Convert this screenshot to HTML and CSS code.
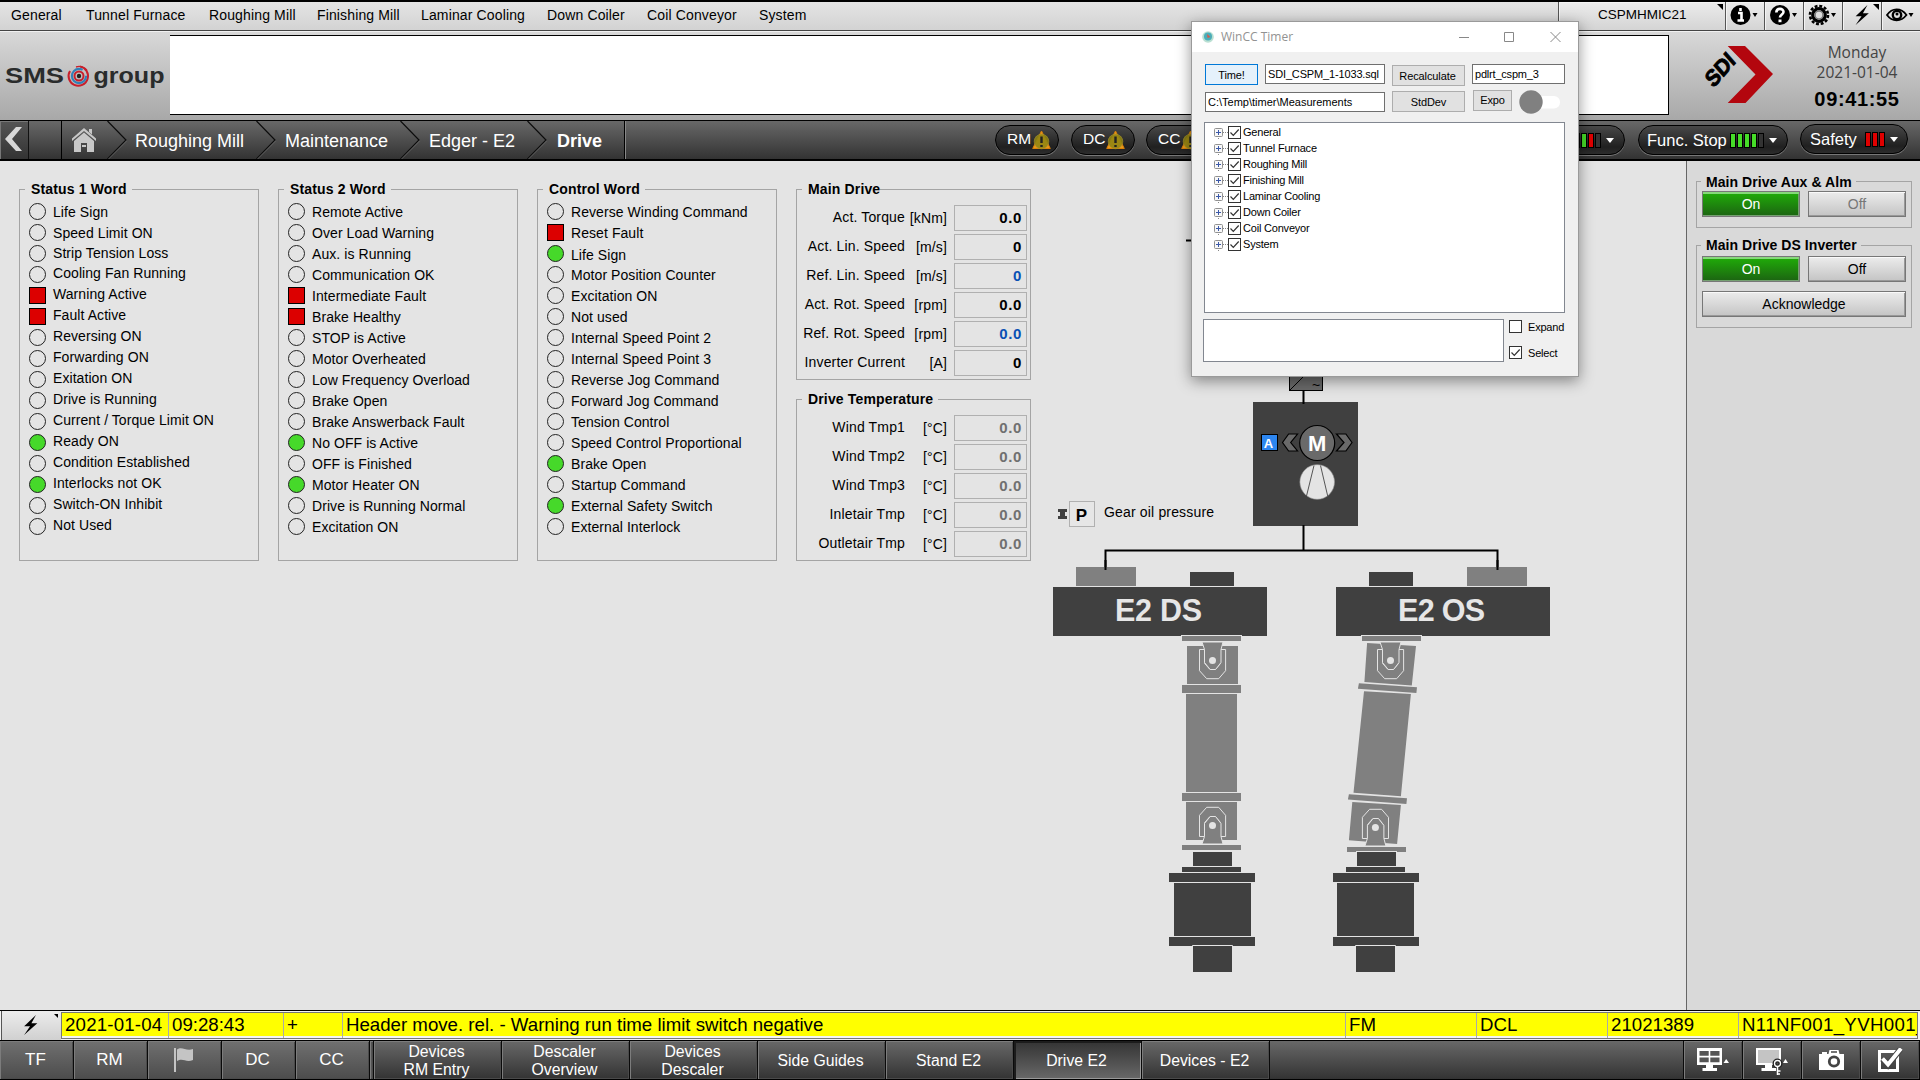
FILE: index.html
```html
<!DOCTYPE html>
<html lang="en">
<head>
<meta charset="utf-8">
<title>Drive E2</title>
<link rel="stylesheet" href="styles.css">
</head>
<body>
<svg width="0" height="0" class="defs">
  <defs>
    <symbol id="bolt" viewBox="0 0 16 22"><path d="M14 0 1 12.500H7.500L1 22 15.500 9H9z"/></symbol>
    <symbol id="warn" viewBox="0 0 19 20"><path d="M9.500 1 18.300 18.500H.7z" fill="#e8981c" stroke="#d98008"/><circle cx="9.500" cy="11.500" r="7.300" fill="#8f8412" fill-opacity=".88" stroke="#a5922c" stroke-width=".6"/><path d="M9.500 6.500v6.500M9.500 15v2" stroke="#222" stroke-width="2.400"/></symbol>
    <symbol id="check" viewBox="0 0 13 13"><rect x=".5" y=".5" width="12" height="12" fill="#fff" stroke="#333"/><path d="M2.500 6.500 5.300 9.300 10.700 3.500" fill="none" stroke="#333" stroke-width="1.200"/></symbol>
    <symbol id="plus" viewBox="0 0 9 9"><rect x=".5" y=".5" width="8" height="8" rx="1" fill="#f8f8f8" stroke="#919191"/><path d="M2 4.500h5M4.500 2v5" stroke="#3b58a8"/></symbol>
    <symbol id="crumb" viewBox="0 0 20 38"><path d="M.5 0 19 19 .5 38" fill="none" stroke="#0c0c0c" stroke-width="1.200"/><path d="M1.500 38 20 19.500" fill="none" stroke="#707070" stroke-width=".8"/></symbol>
  </defs>
</svg>

<header class="menubar">
  <nav class="menu"><a class="m1">General</a><a class="m2">Tunnel Furnace</a><a class="m3">Roughing Mill</a><a class="m4">Finishing Mill</a><a class="m5">Laminar Cooling</a><a class="m6">Down Coiler</a><a class="m7">Coil Conveyor</a><a>System</a></nav>
  <div class="station"><span>CSPMHMIC21</span><i class="corner"></i></div>
  <div class="tool"><svg width="38" height="28" viewBox="0 0 38 28"><circle cx="14.500" cy="13" r="10"/><path d="M14.500 6v3M12 11h3.500v7M11.500 18.500h6.500" fill="none" stroke="#fff" stroke-width="2.600"/><path d="M26.500 11h5l-2.500 4z"/></svg></div>
  <div class="tool"><svg width="38" height="28" viewBox="0 0 38 28"><circle cx="15" cy="13" r="10"/><path d="M11.300 10.500C11.500 5.500 18.700 6 18.500 10 18.300 12.500 15 12.500 15 15.500" fill="none" stroke="#fff" stroke-width="2.600"/><path d="M13.500 17.500h3v2.700h-3z" fill="#fff"/><path d="M27 11h5l-2.500 4z"/></svg></div>
  <div class="tool"><svg width="38" height="28" viewBox="0 0 38 28"><circle cx="15" cy="13" r="9" fill="none" stroke="#000" stroke-width="2.600" stroke-dasharray="2.900 1.812"/><circle cx="15" cy="13" r="6.300" fill="#ddd" stroke="#000" stroke-width="3.200"/><circle cx="15" cy="13" r="4" fill="#ddd" stroke="#777" stroke-width="1.500"/><path d="M27 11h5l-2.500 4z"/></svg></div>
  <div class="tool"><svg width="16" height="20" class="bolt-top"><use href="#bolt"/></svg><i class="corner"></i></div>
  <div class="tool"><svg width="38" height="28" viewBox="0 0 38 28"><path d="M5 13C10 5.500 19 5.500 24.500 13 19 20 10 20 5 13z" fill="none" stroke="#000" stroke-width="1.800"/><circle cx="15" cy="13" r="4.200" fill="none" stroke="#000" stroke-width="2.400"/><circle cx="15" cy="12" r="1.500"/><path d="M26.500 11h5l-2.500 4z"/></svg></div>
</header>

<section class="banner">
  <svg class="sms" width="170" height="84" viewBox="0 34 170 84">
    <g font-family="Liberation Sans, Arial, sans-serif" font-weight="bold" font-size="21.500" fill="#2a2c2c">
      <text x="5" y="82.500" textLength="59" lengthAdjust="spacingAndGlyphs">SMS</text>
      <text x="93.500" y="82.500" textLength="71" lengthAdjust="spacingAndGlyphs">group</text>
    </g>
    <g fill="none"><path d="M80 66.500A9.700 9.700 0 1 1 70 71" stroke="#c8202c" stroke-width="2"/><path d="M76 67a9.700 9.700 0 0 1 11 3.500" stroke="#c8202c" stroke-width="1.500"/><circle cx="79" cy="76" r="7.100" stroke="#3180b8" stroke-width="2.100" stroke-dasharray="37 7"/><circle cx="79" cy="76" r="4.500" stroke="#c8202c" stroke-width="2"/></g><circle cx="79" cy="76" r="2.200" fill="#222"/>
  </svg>
  <div class="message"></div>
  <svg class="sdi" width="88" height="84" viewBox="1698 34 88 84">
    <path d="M1727.700 46H1745L1773 74 1745.500 103H1727.700L1755.500 74.500z" fill="#b3060e"/>
    <text transform="translate(1713.500 88.500) rotate(-49) skewX(-8)" font-family="Liberation Sans, Arial, sans-serif" font-weight="bold" font-size="22" textLength="35" lengthAdjust="spacingAndGlyphs" stroke="#000" stroke-width=".9">SDI</text>
  </svg>
  <div class="clock"><span>Monday</span><span>2021-01-04</span><b>09:41:55</b></div>
</section>

<nav class="crumbs">
  <div class="back"><svg width="18" height="24" viewBox="0 0 18 24"><path d="M11 0h6L7 12l10 12h-6L0 12z" fill="#d8d8d8"/></svg></div>
  <div class="spacer"></div>
  <div class="home"><svg width="24" height="24" viewBox="0 0 24 24"><path d="M12 0 24 10.500V13L12 3 0 13v-2.500z" fill="#c8c8c8"/><path d="M17 1h3v5.500l-3-2.500zM12 4.500 22 13v11h-7v-9H9v9H2V13z" fill="#c8c8c8"/><path d="M10 11h4v4h-4zM10 17h4v2h-4z" fill="#c8c8c8"/></svg></div>
  <svg class="sep" width="20" height="38"><use href="#crumb"/></svg><span class="c1">Roughing Mill</span>
  <svg class="sep" width="20" height="38"><use href="#crumb"/></svg><span class="c2">Maintenance</span>
  <svg class="sep" width="20" height="38"><use href="#crumb"/></svg><span class="c3">Edger - E2</span>
  <svg class="sep" width="20" height="38"><use href="#crumb"/></svg><span class="c4"><b>Drive</b></span>
  <div class="pills">
    <div class="pill small">RM<svg width="19" height="20"><use href="#warn"/></svg></div>
    <div class="pill small">DC<svg width="19" height="20"><use href="#warn"/></svg></div>
    <div class="pill small last">CC<svg width="19" height="20"><use href="#warn"/></svg></div>
    <div class="pill levels"><i class="bar r"></i><i class="bar g"></i><i class="bar r"></i><i class="bar"></i><i class="arrow"></i></div>
    <div class="pill stop"><span>Func. Stop</span><i class="bar g"></i><i class="bar g"></i><i class="bar g"></i><i class="bar g"></i><i class="bar"></i><i class="arrow"></i></div>
    <div class="pill safety"><span>Safety</span><i class="bar r"></i><i class="bar r"></i><i class="bar r"></i><i class="arrow"></i></div>
  </div>
</nav>

<main>
  <div class="groups">
    <fieldset class="word first"><legend>Status 1 Word</legend><ul>
      <li class="flush"><i></i>Life Sign</li><li class="flush"><i></i>Speed Limit ON</li><li class="near"><i></i>Strip Tension Loss</li><li><i></i>Cooling Fan Running</li>
      <li><i class="bad"></i>Warning Active</li><li><i class="bad"></i>Fault Active</li><li><i></i>Reversing ON</li><li><i></i>Forwarding ON</li>
      <li><i></i>Exitation ON</li><li><i></i>Drive is Running</li><li><i></i>Current / Torque Limit ON</li><li><i class="ok"></i>Ready ON</li>
      <li><i></i>Condition Established</li><li><i class="ok"></i>Interlocks not OK</li><li><i></i>Switch-ON Inhibit</li><li><i></i>Not Used</li>
    </ul></fieldset>
    <fieldset class="word"><legend>Status 2 Word</legend><ul>
      <li><i></i>Remote Active</li><li><i></i>Over Load Warning</li><li><i></i>Aux. is Running</li><li><i></i>Communication OK</li>
      <li><i class="bad"></i>Intermediate Fault</li><li><i class="bad"></i>Brake Healthy</li><li><i></i>STOP is Active</li><li><i></i>Motor Overheated</li>
      <li><i></i>Low Frequency Overload</li><li><i></i>Brake Open</li><li><i></i>Brake Answerback Fault</li><li><i class="ok"></i>No OFF is Active</li>
      <li><i></i>OFF is Finished</li><li><i class="ok"></i>Motor Heater ON</li><li><i></i>Drive is Running Normal</li><li><i></i>Excitation ON</li>
    </ul></fieldset>
    <fieldset class="word"><legend>Control Word</legend><ul>
      <li><i></i>Reverse Winding Command</li><li><i class="bad"></i>Reset Fault</li><li class="low"><i class="ok"></i>Life Sign</li><li><i></i>Motor Position Counter</li>
      <li><i></i>Excitation ON</li><li><i></i>Not used</li><li><i></i>Internal Speed Point 2</li><li><i></i>Internal Speed Point 3</li>
      <li><i></i>Reverse Jog Command</li><li><i></i>Forward Jog Command</li><li><i></i>Tension Control</li><li><i></i>Speed Control Proportional</li>
      <li><i class="ok"></i>Brake Open</li><li><i></i>Startup Command</li><li><i class="ok"></i>External Safety Switch</li><li><i></i>External Interlock</li>
    </ul></fieldset>
    <div class="values">
      <fieldset class="drive"><legend class="tight">Main Drive</legend>
        <p><span>Act. Torque</span><em>[kNm]</em><b>0.0</b></p>
        <p><span>Act. Lin. Speed</span><em>[m/s]</em><b>0</b></p>
        <p><span>Ref. Lin. Speed</span><em>[m/s]</em><b class="ref">0</b></p>
        <p><span>Act. Rot. Speed</span><em>[rpm]</em><b>0.0</b></p>
        <p><span>Ref. Rot. Speed</span><em>[rpm]</em><b class="ref">0.0</b></p>
        <p><span>Inverter Current</span><em>[A]</em><b>0</b></p>
      </fieldset>
      <fieldset class="temp"><legend>Drive Temperature</legend>
        <p><span>Wind Tmp1</span><em>[°C]</em><b class="off">0.0</b></p>
        <p><span>Wind Tmp2</span><em>[°C]</em><b class="off">0.0</b></p>
        <p><span>Wind Tmp3</span><em>[°C]</em><b class="off">0.0</b></p>
        <p><span>Inletair Tmp</span><em>[°C]</em><b class="off">0.0</b></p>
        <p><span>Outletair Tmp</span><em>[°C]</em><b class="off">0.0</b></p>
      </fieldset>
    </div>
  </div>

  <svg class="mimic" width="646" height="849" viewBox="1040 161 646 849" font-family="Liberation Sans, Arial, sans-serif">
    <path d="M1186 240.500h40" stroke="#000" stroke-width="2"/>
    <rect x="1289.500" y="357.500" width="33" height="33" fill="#6a6a6a" stroke="#000"/><path d="M1290 390 1322 358" stroke="#000"/>
    <text x="1312" y="390" font-size="14">~</text>
    <rect x="1253" y="402" width="105" height="124" fill="#404040"/>
    <path d="M1303.500 391v13M1303.500 525v26M1105.500 570v-19.500H1497.500V570" fill="none" stroke="#000" stroke-width="2"/>
    <rect x="1261.500" y="434.500" width="16" height="16" fill="#2d86f0" stroke="#000"/>
    <text x="1268.500" y="447.500" font-size="13" font-weight="bold" fill="#fff" text-anchor="middle">A</text>
    <g fill="#6a6a6a" stroke="#000" stroke-width="1.200"><path d="M1282.500 442.500 1288.600 434H1297.500L1290.700 442.500 1297.500 451H1288.600z"/><path d="M1352 442.500 1345.900 434H1336.500L1344 442.500 1336.500 451H1345.900z"/><circle cx="1317.200" cy="443" r="17.500"/></g>
    <text x="1317.200" y="451" font-size="22" font-weight="bold" fill="#fff" text-anchor="middle">M</text>
    <circle cx="1317.200" cy="482" r="17.300" fill="#e4e4e4" stroke="#999" stroke-width=".6"/><path d="M1314 465.500 1306.500 496M1320.500 465.500 1327.700 496" stroke="#555"/>
    <path d="M1058 509h9v3h-2v4h2v3h-9v-3h2v-4h-2z" fill="#404040"/>
    <rect x="1069.500" y="501.500" width="25" height="25" fill="#e6e6e6" stroke="#b0b0b0"/>
    <text x="1081.500" y="520.500" font-size="17" font-weight="bold" text-anchor="middle">P</text>
    <text x="1104" y="517" font-size="14" textLength="110">Gear oil pressure</text>

    <path d="M1076 567h60v19h-60zM1467 567h60v19h-60z" fill="#808080"/>
    <path d="M1105.500 560v10M1497.500 560v10" stroke="#000" stroke-width="2"/>
    <path d="M1190 572h44v14h-44zM1369 572h44v14h-44zM1053 587h214v49h-214zM1336 587h214v49h-214z" fill="#404040"/>
    <g font-size="30.500" font-weight="bold" fill="#e6e6e6"><text x="1115" y="621" textLength="87">E2 DS</text><text x="1398" y="621" textLength="87">E2 OS</text></g>

    <g fill="#808080">
      <path d="M1181 635h61v1h-61zM1361 635h61v1h-61z" fill="#e4e4e4"/>
      <path d="M1182 636h59v5h-59zM1187 646h51v39h-51zM1182 685h59v8h-59zM1186 694h51v98h-51zM1182 793h59v8h-59zM1186 802h51v38h-51zM1182 845h59v5h-59z"/>
      <path d="M1187 684.500h51" stroke="#e4e4e4"/>
      <path d="M1362 636h59v5h-59zM1367.100 643 1416 646 1411.800 685.500 1364.400 682zM1358.900 683.300 1417 687.300 1416.400 693 1357.900 688.800zM1364 691.300 1410.900 694 1400.900 796.300 1353.500 792.700zM1348.900 794.200 1407 798.300 1406.400 804 1347.900 799.500zM1352.300 802 1400.900 805 1397.100 844 1348.900 840.300zM1347 847h59v5h-59z"/>
      <g id="yoke"><path d="M1199.500 649.500v21.200l7.200 8h12l6.900-8v-21.200h-5.100v14l-5.100 6h-5.400l-5.300-6v-14z" stroke="#e4e4e4" fill="#808080"/><path d="M1202 642h21l-2 7.500v13l-5.500 7h-5.300l-5.700-7v-13z" stroke="#e4e4e4"/><ellipse cx="1212.500" cy="660.500" rx="3.500" ry="3.500" fill="#e4e4e4"/></g>
      <use href="#yoke" x="178"/>
      <use href="#yoke" transform="matrix(1 0 0 -1 0 1486)"/>
      <use href="#yoke" transform="matrix(1 0 0 -1 162.900 1488)"/>
    </g>
    <path fill="#404040" d="M1193 852h39v14h-39zM1182 867h59v5h-59zM1169 873h86v9h-86zM1174 883h77v53h-77zM1169 937h86v9h-86zM1193 946h39v26h-39zM1357 852h39v14h-39zM1346 867h59v5h-59zM1333 873h86v9h-86zM1337 883h77v53h-77zM1333 937h86v9h-86zM1356 946h39v26h-39z"/>
    <path fill="none" stroke="#e4e4e4" d="M1192.500 946v-.5h40v.5M1355.500 946v-.5h40v.5M1356 851.500h41"/>
  </svg>

  <aside>
    <fieldset class="aux"><legend>Main Drive Aux &amp; Alm</legend><div class="row"><button class="on">On</button><button class="dim">Off</button></div></fieldset>
    <fieldset class="inv"><legend>Main Drive DS Inverter</legend><div class="row"><button class="on">On</button><button>Off</button></div><button class="wide">Acknowledge</button></fieldset>
  </aside>
</main>

<section class="alarm">
  <div class="quit"><svg width="15" height="20"><use href="#bolt"/></svg><i class="corner"></i></div>
  <div class="line"><span class="a1">2021-01-04</span><span class="a2">09:28:43</span><span class="a3">+</span><span class="a4">Header move. rel. - Warning run time limit switch negative</span><span class="a5">FM</span><span class="a5">DCL</span><span class="a5">21021389</span><span class="a6">N11NF001_YVH001_</span></div>
</section>

<footer>
  <div class="area">TF</div><div class="area">RM</div><div class="area"><svg width="20" height="24" viewBox="0 0 20 24"><path d="M1 0v24" stroke="#c4c4c4" stroke-width="2"/><path d="M3 1.500C8-2 12 3.500 19 1v11C12 15 9 9.500 3 13z" fill="#c4c4c4"/></svg></div><div class="area">DC</div><div class="area">CC</div>
  <div class="gap"></div>
  <div class="page">Devices<br>RM Entry</div><div class="page">Descaler<br>Overview</div><div class="page">Devices<br>Descaler</div><div class="page">Side Guides</div><div class="page">Stand E2</div><div class="page active">Drive E2</div><div class="page">Devices - E2</div>
  <div class="rest"></div>
  <div class="act"><svg width="32" height="24" viewBox="0 0 32 24"><path d="M0 0h25v17H0zM9 17h7v3h4v3H5.500v-3H9z" fill="#fff"/><path d="M2.500 3h9.200v4.800H2.500zM13.300 3h9.200v4.800h-9.200zM2.500 9.500h9.200v4.800H2.500zM13.300 9.500h9.200v4.800h-9.200z" fill="#555"/><path d="M26.500 15h5.500L29.200 11z" fill="#fff"/></svg></div>
  <div class="act"><svg width="32" height="30" viewBox="0 -3 32 30"><path d="M0 0h25v17H0zM9 17h7v3h4v3H5.500v-3H9z" fill="#fff"/><path d="M2 2h21v13H2z" fill="#c4c4c4"/><circle cx="21.500" cy="15.500" r="3" fill="#555" stroke="#222" stroke-width="4"/><circle cx="21.500" cy="15.500" r="3" fill="none" stroke="#fff" stroke-width="1.300"/><path d="M21.500 18.500V27M22 23h2.500M22 26h2" stroke="#fff" stroke-width="1.500"/><path d="M27 15h5L29.500 11z" fill="#fff"/></svg></div>
  <div class="act"><svg width="25" height="20" viewBox="0 0 25 20"><path d="M0 4h9.500l1-4h9l1 4H25v16H0z" fill="#fff"/><path d="M3 2h5v2H3z" fill="#fff"/><circle cx="15" cy="11.500" r="4.700" fill="#fff" stroke="#444" stroke-width="2.800"/><path d="M12 2h6" stroke="#444" stroke-width="1.500"/></svg></div>
  <div class="act"><svg width="25" height="24" viewBox="0 0 25 24"><path d="M1.500 3.500h18v19h-18z" fill="none" stroke="#fff" stroke-width="3"/><path d="M4.500 11 10 17 22.500 1" fill="none" stroke="#444" stroke-width="6"/><path d="M4.500 10.500 10 16.500 23 .5" fill="none" stroke="#fff" stroke-width="4"/></svg></div>
</footer>

<div class="dialog">
  <div class="titlebar">
    <svg width="14" height="14" viewBox="0 0 14 14"><circle cx="7" cy="7" r="5.800" fill="#b9dfd2"/><circle cx="7" cy="6.500" r="4" fill="#49aeb9"/><path d="M6 4 9.500 7 6.500 8z" fill="#d65b4c"/></svg>
    <span>WinCC Timer</span>
    <svg class="winbtns" width="102" height="12" viewBox="0 0 102 12"><path d="M0 6.500h10M45.500 1.500h9v9h-9zM91.500 1l10 10M101.500 1l-10 10" fill="none" stroke="#888"/></svg>
  </div>
  <div class="frow one"><div class="btn go">Time!</div><div class="field sql">SDI_CSPM_1-1033.sql</div><div class="btn calc">Recalculate</div><div class="field host">pdlrt_cspm_3</div></div>
  <div class="frow two"><div class="field path">C:\Temp\timer\Measurements</div><div class="btn dev">StdDev</div><div class="btn expo">Expo</div><svg width="42" height="24" viewBox="0 0 42 24"><rect x="10" y="6" width="31" height="12.500" rx="6" fill="#fff"/><circle cx="12" cy="12" r="11.700" fill="#808080"/></svg></div>
  <div class="tree">
    <div><svg class="p"><use href="#plus"/></svg><u></u><svg class="k"><use href="#check"/></svg>General</div>
    <div><svg class="p"><use href="#plus"/></svg><u></u><svg class="k"><use href="#check"/></svg>Tunnel Furnace</div>
    <div><svg class="p"><use href="#plus"/></svg><u></u><svg class="k"><use href="#check"/></svg>Roughing Mill</div>
    <div><svg class="p"><use href="#plus"/></svg><u></u><svg class="k"><use href="#check"/></svg>Finishing Mill</div>
    <div><svg class="p"><use href="#plus"/></svg><u></u><svg class="k"><use href="#check"/></svg>Laminar Cooling</div>
    <div><svg class="p"><use href="#plus"/></svg><u></u><svg class="k"><use href="#check"/></svg>Down Coiler</div>
    <div><svg class="p"><use href="#plus"/></svg><u></u><svg class="k"><use href="#check"/></svg>Coil Conveyor</div>
    <div><svg class="p"><use href="#plus"/></svg><u></u><svg class="k"><use href="#check"/></svg>System</div>
  </div>
  <div class="bottom"><div class="out"></div><div class="opts"><label><i></i>Expand</label><label><svg class="k"><use href="#check"/></svg>Select</label></div></div>
</div>
</body>
</html>
```
FILE: styles.css
```css
* { box-sizing: border-box; }
body { margin: 0; width: 1920px; height: 1080px; overflow: hidden; display: flex; flex-direction: column; font: 14px/16px "Liberation Sans", Arial, sans-serif; color: #000; background: #e4e4e4; }
svg { display: block; flex: none; }
.defs { position: absolute; }

.menubar { height: 32px; flex: none; display: flex; border-top: 2px solid #000; border-bottom: 1px solid #f0f0f0; background: linear-gradient(#e4e4e4, #d2d2d2); box-shadow: inset 0 -1px #444; }
.menu { flex: 1; display: flex; padding-left: 11px; line-height: 27px; letter-spacing: .14px; white-space: nowrap; }
.m1 { width: 75px; } .m2 { width: 123px; } .m3 { width: 108px; } .m4 { width: 104px; } .m5 { width: 126px; } .m6 { width: 100px; } .m7 { width: 112px; }
.station, .tool { position: relative; height: 29px; border-left: 1px solid #555; border-bottom: 1px solid #444; box-shadow: inset 1px 1px #f4f4f4; background: linear-gradient(#ececec, #d4d4d4); }
.station { width: 167px; line-height: 26px; padding-left: 39px; font-size: 13.500px; }
.tool { width: 39px; padding-left: 0; }
.bolt-top { margin: 3px 0 0 11px; }
.corner { position: absolute; right: 2px; top: 2px; border: 3px solid #000; border-left-color: transparent; border-bottom-color: transparent; }

.banner { height: 88px; flex: none; display: flex; align-items: flex-start; padding-top: 2px; background: linear-gradient(#d8d8d8, #a8a8a8); }
.message { width: 1499px; height: 80px; flex: none; margin-top: 1px; background: #fff; border: 1px solid #000; border-left: 0; }
.sdi { margin-left: 29px; }
.clock { width: 126px; margin-left: 8px; display: flex; flex-direction: column; align-items: center; color: #444; font: 15.5px/20px "Open Sans", sans-serif; padding-top: 8px; }
.clock b { color: #000; font: bold 20px/24px "Liberation Sans", Arial, sans-serif; letter-spacing: .65px; margin-top: 5px; }

.crumbs { height: 41px; flex: none; display: flex; color: #fff; font-size: 18px; line-height: 41px; border-top: 1px solid #000; border-bottom: 2px solid #000; background: linear-gradient(#686868, #333); white-space: nowrap; }
.back { width: 29px; border-right: 1px solid #111; padding: 6px 0 0 5px; background: linear-gradient(#555, #333); box-shadow: inset 1px 1px #777; }
.spacer { width: 33px; border-right: 1px solid #000; }
.home { width: 45px; padding: 7px 0 0 10px; }
.c1 { width: 129px; padding-left: 8px; } .c2 { width: 124px; padding-left: 9px; } .c3 { width: 107px; padding-left: 9px; } .c4 { width: 78px; padding-left: 10px; border-right: 1px solid #000; box-shadow: 1px 0 #888; }
.pills { flex: 1; display: flex; padding: 4px 0 0 370px; font-size: 17px; }
.pill { height: 30px; flex: none; display: flex; align-items: center; border: 1px solid #000; border-radius: 15px; background: linear-gradient(#484848, #202020 75%, #2c2c2c); box-shadow: 0 1px #777; line-height: 28px; }
.small { width: 64px; margin-right: 12px; padding: 0 0 2px 11px; font-size: 15.500px; }
.small svg { margin: 2px 0 0 1px; }
.small.last { margin: 0 275px 0 -1px; }
.levels { width: 140px; padding-left: 88px; margin-right: 13px; }
.stop { width: 150px; margin-right: 12px; padding-left: 8px; font-size: 16.500px; }
.stop span { width: 83px; flex: none; }
.safety { width: 108px; padding-left: 9px; margin-top: -1px; font-size: 16.500px; }
.safety span { width: 55px; flex: none; }
.bar { width: 6px; height: 15px; flex: none; border: 1px solid #000; margin-right: 1px; background: #333; }
.bar.g { background: #46dc28; } .bar.r { background: #e00000; }
.arrow { flex: none; border: 4px solid transparent; border-top: 5px solid #fff; border-bottom: 0; margin-left: 4px; }

main { flex: 1; display: flex; min-height: 0; }
.groups { width: 1040px; display: flex; padding: 19px 0 0 19px; gap: 19px; flex: none; }
fieldset { margin: 0; padding: 0; border: 1px solid #a4a4a4; min-width: 0; }
legend { font-weight: bold; line-height: 19px; height: 19px; padding: 0 5px 0 6px; margin-left: 5px; letter-spacing: .15px; white-space: nowrap; }
.word { width: 240px; height: 381px; }
ul { list-style: none; margin: 0; padding: 2px 0 0 9px; }
li { height: 21px; display: flex; align-items: center; white-space: nowrap; line-height: 20px; letter-spacing: .07px; padding-top: 1px; }
li i { width: 17px; height: 17px; border: 1px solid #222; border-radius: 50%; margin-right: 7px; flex: none; }
li i.ok { background: #46d92a; }
li i.bad { background: #dc0000; border-color: #000; border-radius: 0; }
li i { margin-top: -1px; }
.first li { padding: 0; align-items: flex-start; line-height: 19px; }
.first li i { margin-top: 2px; }
.first li.flush { line-height: 23px; }
.first li.near { line-height: 21px; }
li.low { padding-top: 3px; }
li.low i { margin-top: -3px; }
.values { display: flex; flex-direction: column; gap: 9px; width: 235px; }
.drive { height: 200px; margin-bottom: 1px; padding-top: 6px; }
.temp { height: 171px; padding-top: 6px; }
.tight { padding-right: 0; }
p { margin: 0 0 3px; display: flex; height: 26px; line-height: 24px; letter-spacing: .15px; }
p span { width: 108px; flex: none; text-align: right; white-space: nowrap; }
p em { font-style: normal; width: 42px; flex: none; line-height: 26px; text-align: right; margin-right: 7px; }
p b { width: 73px; flex: none; height: 26px; border: 1px solid #b0b0b0; text-align: right; padding-right: 4px; font-size: 15px; line-height: 24px; letter-spacing: .6px; }
.ref { color: #0a50b4; } .off { color: #707070; }

aside { flex: 1; border-left: 1px solid #666; background: #d9d9d9; padding: 11px 7px 0 9px; }
aside fieldset { width: 216px; }
aside legend { padding: 0 4px 0 5px; margin-left: 4px; letter-spacing: .06px; }
.aux { height: 56px; margin-bottom: 8px; }
.aux legend { line-height: 21px; }
.inv { height: 92px; }
.row { display: flex; gap: 8px; padding-left: 5px; }
.inv .row { padding-top: 1px; }
button { width: 98px; height: 26px; flex: none; padding: 0; font: 14px "Liberation Sans", Arial, sans-serif; border: 1px solid #777; box-shadow: inset 0 1px #fafafa, inset -1px -1px #999; background: linear-gradient(#ececec, #c4c4c4); color: #000; }
button.on { color: #fff; background: linear-gradient(#20ae08, #1c6412); box-shadow: inset 0 2px #86d87a, inset -1px -1px #74a070; }
button.dim { color: #777; }
button.wide { width: 204px; margin: 9px 0 0 5px; display: block; }

.alarm { height: 30px; flex: none; display: flex; border-top: 1px solid #000; background: #f2f2f2; padding-left: 1px; }
.quit { position: relative; width: 60px; flex: none; border-left: 1px solid #555; background: linear-gradient(#ececec, #d0d0d0); padding: 4px 0 0 21px; }
.quit .corner { top: 3px; right: 3px; border-width: 2.500px; }
.line { width: 1857px; margin-top: 1px; height: 27px; border: 1px solid #777; display: flex; font-size: 18.670px; line-height: 23px; white-space: nowrap; overflow: hidden; background: linear-gradient(#ff0 23px, #f4f4f4 23px); }
.line span { border-right: 1px solid #aaa; padding-left: 3px; height: 25px; overflow: hidden; flex: none; }
.a1 { width: 107px; letter-spacing: .2px; } .a2 { width: 115px; } .a3 { width: 59px; } .a4 { width: 1003px; } .a5 { width: 131px; } .line .a6 { width: 181px; border: 0; letter-spacing: .35px; }

footer { height: 40px; flex: none; display: flex; border-top: 1px solid #000; border-bottom: 1px solid #000; color: #fff; background: linear-gradient(#686868, #333); }
footer > div { display: flex; flex: none; align-items: center; justify-content: center; text-align: center; border-right: 1px solid #0a0a0a; box-shadow: inset 1px 1px #7c7c7c, inset -1px -1px #4a4a4a; }
.area { width: 74px; font-size: 17px; padding-right: 2px; background: linear-gradient(#707070, #4c4c4c); }
footer .gap { width: 4px; background: #555; }
.page { width: 128px; font-size: 15.800px; line-height: 18px; padding: 1px 2px 0 0; }
footer .active { background: linear-gradient(#333, #686868); box-shadow: inset 2px 2px #1c1c1c, inset -1px -1px #999; }
footer .rest { flex: 1; box-shadow: none; }
.act { width: 59px; }

.dialog { position: absolute; left: 1191px; top: 21px; width: 388px; height: 356px; border: 1px solid #9a9a9a; background: #f0f0f0; box-shadow: 0 4px 14px rgba(0,0,0,.42); font-size: 11px; line-height: 13px; letter-spacing: -.1px; }
.titlebar { height: 30px; background: #fff; display: flex; align-items: center; padding: 0 0 1px 9px; color: #929292; font: 12px "Open Sans", sans-serif; letter-spacing: 0; }
.titlebar span { margin-left: 6px; flex: 1; }
.winbtns { margin-right: 17px; }
.frow { display: flex; padding-left: 13px; }
.one { padding-top: 12px; height: 38px; }
.two { height: 32px; align-items: flex-start; }
.btn { border: 1px solid #adadad; background: #e1e1e1; height: 21px; line-height: 20px; text-align: center; flex: none; }
.field { border: 1px solid #6f6f6f; background: #fff; height: 20px; line-height: 18px; padding-left: 2px; flex: none; white-space: nowrap; overflow: hidden; }
.go { width: 53px; border-color: #0078d7; background: #e5f1fb; }
.sql { width: 120px; margin-left: 7px; letter-spacing: -.15px; }
.calc { width: 73px; margin: 1px 7px 0; padding-right: 2px; }
.host { width: 93px; letter-spacing: -.2px; }
.path { width: 180px; margin-top: 2px; letter-spacing: 0; }
.dev { width: 73px; margin: 1px 8px 0 7px; }
.expo { width: 39px; margin-right: 7px; line-height: 19px; }
.tree { margin-left: 12px; width: 361px; height: 191px; border: 1px solid #828790; background: #fff; padding: 1px 0 0 9px; letter-spacing: -.2px; }
.tree div { height: 16px; display: flex; align-items: center; background: linear-gradient(#888, #888) 4px 14px / 1px 1px no-repeat; }
.tree .p { width: 9px; height: 9px; }
.tree u { width: 5px; height: 1px; border-top: 1px dotted #888; }
.k { width: 13px; height: 13px; margin-right: 2px; }
.bottom { display: flex; margin: 6px 0 0 11px; gap: 5px; }
.out { width: 301px; height: 43px; border: 1px solid #828790; background: #fff; }
.opts { display: flex; flex-direction: column; gap: 13px; padding-top: 1px; letter-spacing: -.2px; }
.opts label { display: flex; height: 13px; line-height: 14px; }
.opts i { width: 13px; height: 13px; border: 1px solid #333; background: #fff; margin-right: 6px; }
.opts .k { margin-right: 6px; }
```
